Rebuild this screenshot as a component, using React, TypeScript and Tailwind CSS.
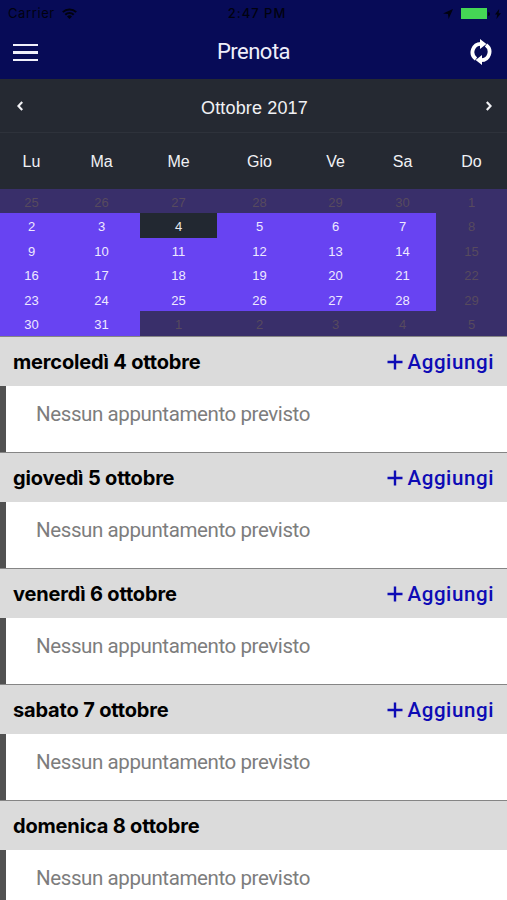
import clsx from 'clsx'

const weekDays = ['Lu', 'Ma', 'Me', 'Gio', 'Ve', 'Sa', 'Do']

const weeks = [
  [25, 26, 27, 28, 29, 30, 1],
  [2, 3, 4, 5, 6, 7, 8],
  [9, 10, 11, 12, 13, 14, 15],
  [16, 17, 18, 19, 20, 21, 22],
  [23, 24, 25, 26, 27, 28, 29],
  [30, 31, 1, 2, 3, 4, 5]
]

const agenda = [
  { id: '1', label: 'mercoledì 4 ottobre', canAdd: true },
  { id: '2', label: 'giovedì 5 ottobre', canAdd: true },
  { id: '3', label: 'venerdì 6 ottobre', canAdd: true },
  { id: '4', label: 'sabato 7 ottobre', canAdd: true },
  { id: '5', label: 'domenica 8 ottobre', canAdd: false }
]

const columns = 'grid grid-cols-[63px_77px_77px_85px_67px_67px_71px]'

// Sundays and the days of the adjacent months can't be booked
function isDisabled (week: number, day: number) {
  return week === 0 || day === 6 || (week === 5 && day > 1)
}

function StatusBar () {
  return (
    <div className="grid h-[27px] grid-cols-3 items-center px-2 font-['Inter',sans-serif] text-[13px] text-[#01020f]">
      <div className="flex items-center gap-[7px]">
        <span className="tracking-[0.6px]">Carrier</span>
        <svg width="15" height="11" viewBox="0 0 15 11" fill="none" stroke="currentColor" strokeWidth="2">
          <path d="M.8 4.1a9.6 9.6 0 0 1 13.4 0M3.3 6.7a6 6 0 0 1 8.4 0" />
          <path d="M7.5 11 5 8.5a3.6 3.6 0 0 1 5 0z" fill="currentColor" stroke="none" />
        </svg>
      </div>
      <div className="pl-[7px] text-center font-medium tracking-[1px]">2:47 PM</div>
      <div className="flex items-center justify-end">
        <svg width="10" height="10" viewBox="0 0 10 10" fill="currentColor">
          <path d="M10 0 5.6 10 5 5 0 4.4z" />
        </svg>
        <span className="ml-[8px] h-[11px] w-[26px] bg-[#45d655]" />
        <span className="ml-px h-1 w-[2px] rounded-r bg-[#01020f]" />
        <svg className="-mr-[2px] ml-[5px]" width="6" height="10" viewBox="0 0 6 10" fill="currentColor">
          <path d="M4.2 0 0 5.6h2.3L1.4 10 6 4.2H3.6z" />
        </svg>
      </div>
    </div>
  )
}

function NavBar () {
  return (
    <nav className="grid h-[50px] grid-cols-3 items-center pl-[13px] pr-[15px] text-white">
      <button className="flex w-[25px] flex-col gap-[5px] pt-px" aria-label="Menu">
        <span className="h-[2.6px] w-full bg-[#f0f0fc]" />
        <span className="h-[2.6px] w-full bg-[#f0f0fc]" />
        <span className="h-[2.6px] w-full bg-[#f0f0fc]" />
      </button>
      <h1 className="pl-[2px] text-center font-['Roboto',sans-serif] text-[22px] leading-none tracking-[-0.5px] text-[#eeeefa]">
        Prenota
      </h1>
      <button className="justify-self-end" aria-label="Aggiorna">
        <svg width="22" height="26" viewBox="0 0 22 26" fill="none" stroke="currentColor" strokeWidth="3.8">
          <path d="M6 20A8.4 8.4 0 0 1 11.2 4.8" />
          <path d="M16 6A8.4 8.4 0 0 1 10.8 21.2" />
          <path d="M10 0 16.4 5 10 10zM12 16 5.6 21l6.4 5z" fill="currentColor" stroke="none" />
        </svg>
      </button>
    </nav>
  )
}

function Calendar () {
  return (
    <section className="h-[257px] overflow-hidden bg-[#252932] font-['Liberation_Sans',Arial,sans-serif] text-[#f1f1f5]">
      <div className="flex h-[54px] items-center justify-between border-b border-[#2e323b] pl-[17px] pr-[15px]">
        <svg width="6" height="10" viewBox="0 0 6 10" fill="none" stroke="currentColor" strokeWidth="2.2">
          <path d="M5.2 1 1.4 5l3.8 4" />
        </svg>
        <span className="pt-[5px] text-[18px] tracking-[0.15px]">Ottobre 2017</span>
        <svg width="6" height="10" viewBox="0 0 6 10" fill="none" stroke="currentColor" strokeWidth="2.2">
          <path d="m.8 1 3.8 4L.8 9" />
        </svg>
      </div>
      <div className={clsx(columns, 'h-14 items-center pt-[2px] text-center text-[16px]')}>
        {weekDays.map((name) => (
          <span key={name}>{name}</span>
        ))}
      </div>
      {weeks.map((days, week) => (
        <div key={week} className={clsx(columns, 'h-[24.45px] grid-rows-1 text-center text-[13px] leading-[27px]')}>
          {days.map((date, day) => (
            <span
              key={day}
              className={clsx(
                'h-full',
                week === 1 && day === 2 && 'bg-[#222831] text-[#e8e8ee]',
                isDisabled(week, day) && 'bg-[#392f6a] text-[#574a5e]',
                !isDisabled(week, day) && !(week === 1 && day === 2) && 'bg-[#6843f2] text-[#eee9ff]'
              )}
            >
              {date}
            </span>
          ))}
        </div>
      ))}
    </section>
  )
}

export default function App () {
  return (
    <main className="h-[900px] w-[507px] overflow-hidden bg-white">
      <header className="h-[79px] bg-[#070b57]">
        <StatusBar />
        <NavBar />
      </header>
      <Calendar />
      {agenda.map((item) => (
        <section key={item.id} className="h-[116px]">
          <div className="flex h-[50px] items-center justify-between border-t border-[#858585] bg-[#dbdbdb] px-[13px]">
            <h2 className="font-['Inter',sans-serif] text-[20px] font-bold tracking-[-0.17px] text-black">
              {item.label}
            </h2>
            {item.canAdd && (
              <button className="flex items-center gap-[4px] text-[#0d0bb5]">
                <svg width="16" height="16" viewBox="0 0 16 16" stroke="currentColor" strokeWidth="2.4">
                  <path d="M8 .5v15M.5 8h15" />
                </svg>
                <span className="pt-px font-['Roboto',sans-serif] text-[20.5px] font-medium tracking-[0.6px]">Aggiungi</span>
              </button>
            )}
          </div>
          <div className="h-[66px] border-l-[6px] border-[#515151] pl-[30px] pt-[13px]">
            <p className="font-['Roboto',sans-serif] text-[20.5px] leading-[30px] tracking-[-0.4px] text-[#7d7d7d]">
              Nessun appuntamento previsto
            </p>
          </div>
        </section>
      ))}
    </main>
  )
}
